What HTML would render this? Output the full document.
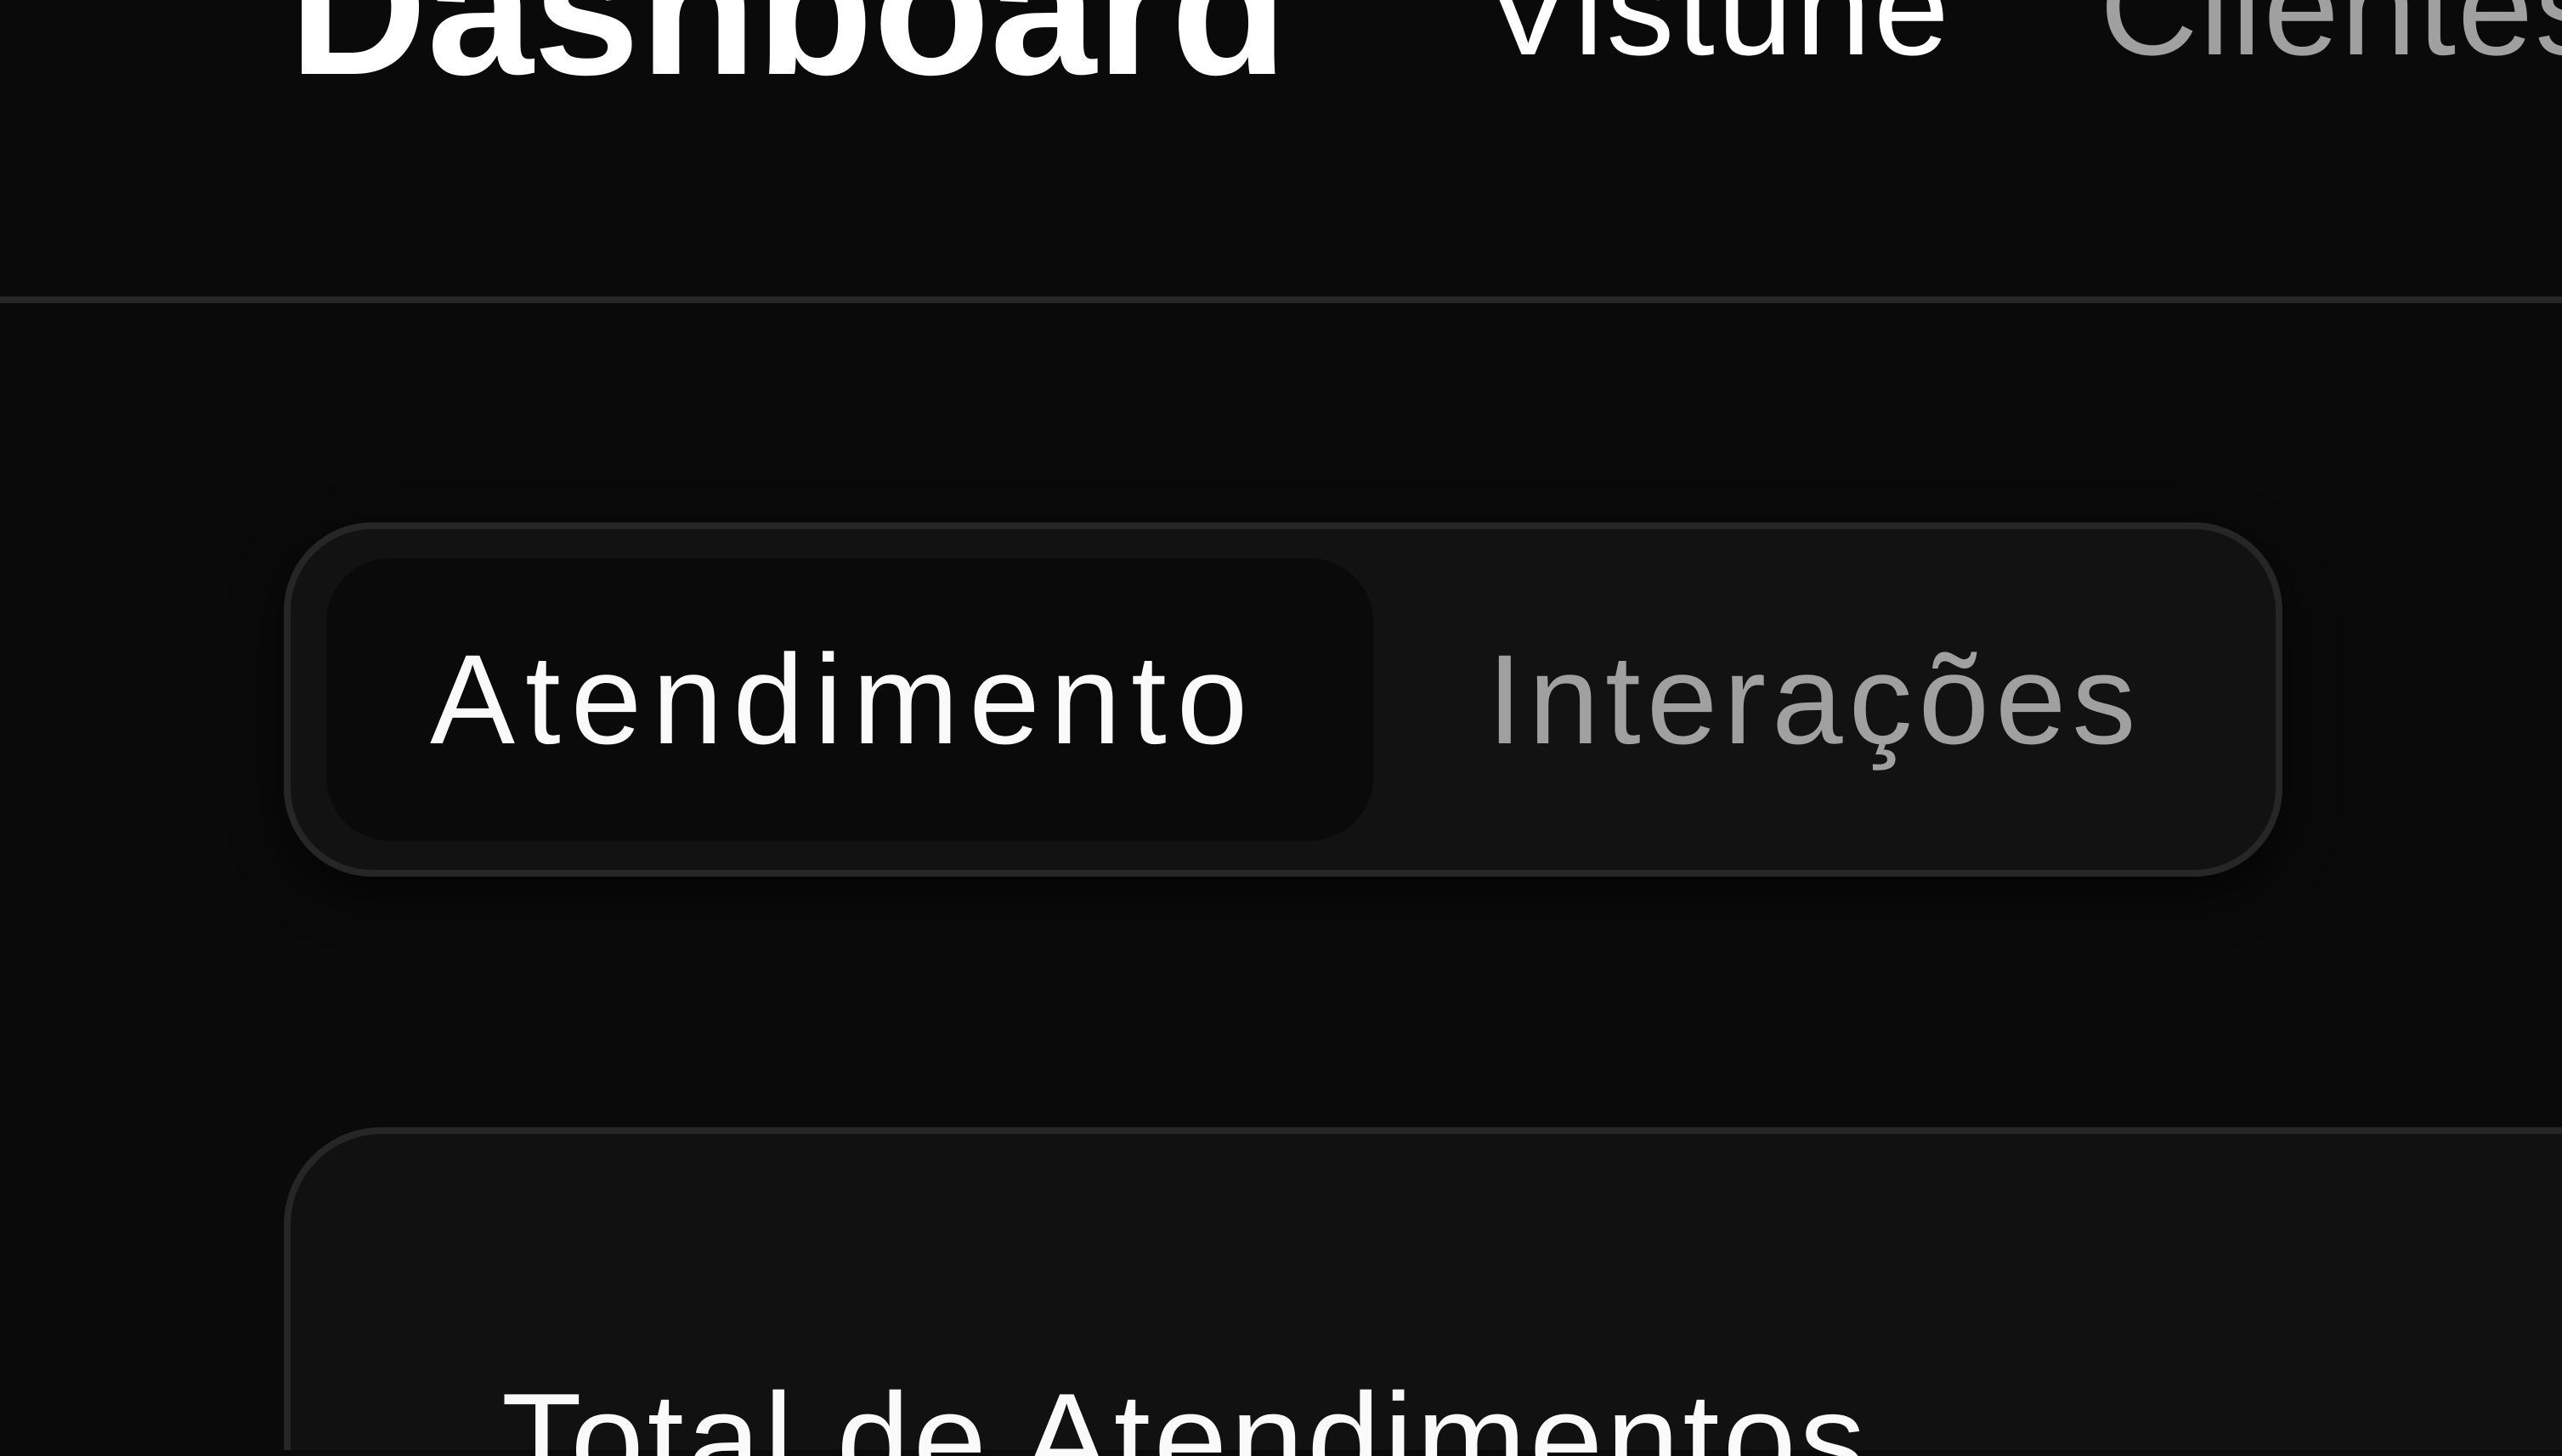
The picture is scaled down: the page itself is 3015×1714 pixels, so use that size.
<!DOCTYPE html>
<html><head><meta charset="utf-8"><style>
html,body{margin:0;padding:0;width:3015px;height:1714px;overflow:hidden;}
body{background:#0a0a0a;position:relative;font-family:"Liberation Sans",sans-serif;}
.t{position:absolute;line-height:1;white-space:nowrap;}
</style></head><body>
<div class="t" style="left:340px;top:-103px;font-size:225px;font-weight:bold;color:#fff;">Dashboard</div>
<div class="t" style="left:1745px;top:-71px;font-size:160px;color:#fff;letter-spacing:3px;">Vistune</div>
<div class="t" style="left:2471px;top:-71px;font-size:160px;color:#a0a0a0;letter-spacing:2px;">Clientes</div>
<div style="position:absolute;left:0;top:349px;width:3015px;height:8px;background:#262626;"></div>
<div style="position:absolute;left:334px;top:615px;width:2352px;height:417px;box-sizing:border-box;border:8px solid #262626;border-radius:104px;background:#121212;box-shadow:0 20px 60px rgba(0,0,0,.6);"></div>
<div style="position:absolute;left:384px;top:657px;width:1232px;height:333px;border-radius:75px;background:#0a0a0a;"></div>
<div class="t" style="left:506px;top:748px;font-size:150px;color:#fafafa;letter-spacing:12px;">Atendimento</div>
<div class="t" style="left:1750px;top:748px;font-size:150px;color:#a0a0a0;letter-spacing:7px;">Interações</div>
<div style="position:absolute;left:334px;top:1327px;width:2900px;height:380px;box-sizing:border-box;border:8px solid #262626;border-bottom:none;border-right:none;border-radius:115px 0 0 0;background:#111;"></div>
<div class="t" style="left:590px;top:1617px;font-size:155px;color:#fafafa;letter-spacing:4px;">Total de Atendimentos</div>
</body></html>
